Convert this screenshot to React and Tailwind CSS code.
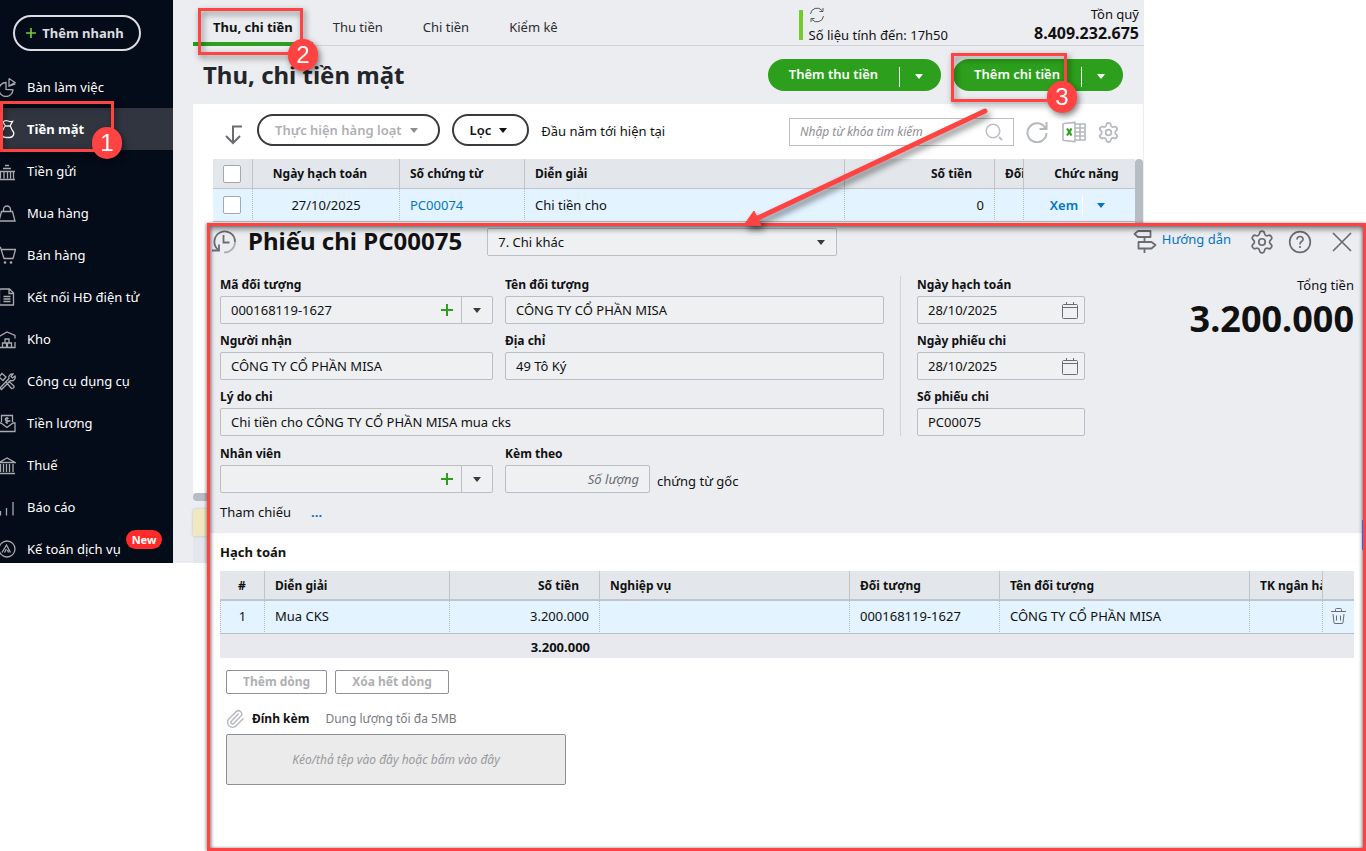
import { useState } from "react";
import clsx from "clsx";
import { twMerge } from "tailwind-merge";
import { Paperclip, Settings } from "lucide-react";

const menuItems = [
  { name: "Bàn làm việc", icon: "desk" },
  { name: "Tiền mặt", icon: "cash" },
  { name: "Tiền gửi", icon: "deposit" },
  { name: "Mua hàng", icon: "buy" },
  { name: "Bán hàng", icon: "sell" },
  { name: "Kết nối HĐ điện tử", icon: "invoice" },
  { name: "Kho", icon: "stock" },
  { name: "Công cụ dụng cụ", icon: "tools" },
  { name: "Tiền lương", icon: "salary" },
  { name: "Thuế", icon: "tax" },
  { name: "Báo cáo", icon: "report" },
  { name: "Kế toán dịch vụ", icon: "service", isNew: true },
];

const menuPaths = {
  desk: "M10 5.5A7 7 0 1 0 17 12.8L10 12.5ZM13 1.5V9L19.5 7M13 1.5L19 5.5L13 9",
  cash: "M7 3q2.5-2 5-1t4.5.5l-2.5 4.5h-4.5zM9.500 7c-2 1-1.500 3-3 4.500c-2.500 3-.500 7 3.500 7h3.500c4 0 5.500-4.500 3-7c-1.500-1.500-1-3.500-2.500-4.500",
  deposit: "M9 4.5h4M7 7.5h8M3 10.5h16M4.500 10.500v7M8 10.500v7M11.500 10.500v7M14.500 10.500v7M17.500 10.500v7M3 18.500h16",
  buy: "M5.5 8.500h11l2.500 9.500h-16zM7.500 8.500v-2a3.500 3.500 0 0 1 7 0v2",
  sell: "M2 2.5h2.500l3.500 11h9l2.500-9h-14.500",
  invoice: "M5 2h8.5l4 4v12h-12.500q-1.500 0-1.500-1.500v-13q0-1.500 1.500-1.500zM13 2v4.500h4.500M7.500 9.500h7M7.500 12h7M7.500 14.500h7",
  stock: "M3 7.5L11 3L19 6.500v3M19 13v5.500H3M9 10h4v4h-4zM6.500 14h4v4.500h-4zM11.500 14h4v4.500h-4z",
  tools: "M4 17l9-9.500a3.500 3.500 0 0 1 4-4.500l-2 2.500 1.500 1.500 2.500-2a3.500 3.500 0 0 1-4.500 4.500l-9 9zM3 6l3-3.500 4 3.500-3 3.500zM10 11l5.500 6.500q3 0 2.500-2.500l-5.500-5",
  salary: "M5.5 9v-6.500h11v6.500M3 10v8.500h16v-8.500h-2l-6 4.500-6-4.500zM12.800 5.500q-3.500-1-3.500.800t3.500 1.500t-3.500 1.500M11 4v7",
  tax: "M3 7.5L11 3l8 4.500zM4.500 9v8M7.500 9v8M10.500 9v8M13.500 9v8M17 9v8M3 18.500h16",
  report: "M4.500 14v4.500M10.500 11v7.500M17 5v13.500",
  service: "M19 10a8 8 0 1 1-16 0a8 8 0 1 1 16 0M6 13.500L10.500 6l4 7.500M8.500 13.500l2-3.500M12.500 13.500l-1-2.500",
};

const Caret = ({ className }) => (
  <svg viewBox="0 0 8 5" className={clsx("h-[5px] w-2 fill-current", className)}>
    <path d="M0 0h8L4 5z" />
  </svg>
);

const PlusIcon = ({ className }) => (
  <svg viewBox="0 0 12 12" fill="none" stroke="currentColor" strokeWidth="2" className={className}>
    <path d="M6 0v12M0 6h12" />
  </svg>
);

const Sidebar = () => (
  <aside className="w-[173px] shrink-0 bg-[#040b19] pt-[15px] text-white">
    <button className="ml-[13px] flex h-9 w-32 items-center justify-center gap-1.5 rounded-full border-2 border-[#dcdde0] pr-1 font-bold text-[#dcdde0]">
      <PlusIcon className="size-2.5 text-[#74cb2f]" />
      Thêm nhanh
    </button>
    <nav className="mt-[15px] -mb-[7px]">
      {menuItems.map((item) => (
        <a
          key={item.name}
          href="#"
          className={clsx(
            "flex items-center py-[11px] whitespace-nowrap",
            item.name === "Tiền mặt" && "bg-[#30353f] font-bold"
          )}
        >
          <svg
            viewBox="0 0 20 20"
            fill="none"
            stroke="currentColor"
            strokeWidth="1.3"
            className={clsx("mr-[11px] -ml-1 size-5 shrink-0", item.icon === "cash" ? "text-white" : "text-[#a9aaad]")}
          >
            <path d={menuPaths[item.icon]} />
            {item.icon === "sell" && (
              <g fill="currentColor" stroke="none">
                <circle cx="9" cy="17.5" r="1.3" />
                <circle cx="15" cy="17.5" r="1.3" />
              </g>
            )}
          </svg>
          <span>{item.name}</span>
          {item.isNew && (
            <span className="-mt-5 ml-[5px] rounded-full bg-[#ff2a2a] px-1.5 text-[11px] leading-[19px] font-bold">New</span>
          )}
        </a>
      ))}
    </nav>
  </aside>
);

const TopTabs = () => {
  const [active, setActive] = useState("Thu, chi tiền");
  return (
    <div className="ml-5 flex h-[46px] items-stretch border-b border-[#d2d4d9]">
      {["Thu, chi tiền", "Thu tiền", "Chi tiền", "Kiểm kê"].map((tab) => (
        <button
          key={tab}
          onClick={() => setActive(tab)}
          className={clsx(
            "-mb-px border-b-4 px-5 pt-3",
            active === tab ? "border-[#2ca01c] font-bold" : "border-transparent text-[#2b2c30]"
          )}
        >
          {tab}
        </button>
      ))}
      <div className="ml-auto flex pt-[5px] pr-[5px]">
        <div className="mt-[5px] mr-1.5 h-[30px] w-1 bg-[#74cb2f]" />
        <div className="mr-[86px]">
          <svg viewBox="0 0 16 16" fill="none" stroke="#55575d" className="my-0.5 size-4">
            <path d="M1.5 7a6.500 6.500 0 0 1 11.500-3.500M14 1v3.500h-3.500M14.500 9a6.500 6.500 0 0 1-11.500 3.500M2 15v-3.500h3.500" />
          </svg>
          <p>Số liệu tính đến: 17h50</p>
        </div>
        <div className="text-right">
          <p className="leading-[18px]">Tồn quỹ</p>
          <p className="text-base leading-5 font-bold">8.409.232.675</p>
        </div>
      </div>
    </div>
  );
};

const AddButton = ({ label }) => (
  <div className="flex h-8 items-center rounded-full bg-[#2ca01c] font-semibold text-white">
    <button className="h-8 px-[21px] pb-0.5">{label}</button>
    <span className="mt-1 h-5 w-px bg-white" />
    <button aria-label={label + " khác"} className="flex h-8 w-[41px] items-center justify-center pt-0.5 pr-1">
      <Caret />
    </button>
  </div>
);

const Toolbar = () => (
  <div className="mb-[3px] flex h-[52px] items-center pr-[23px] pl-8">
    <svg viewBox="0 0 18 20" fill="none" stroke="#6b6c72" strokeWidth="2" className="mt-2.5 h-5 w-[18px]">
      <path d="M17 1.5H8V17M1 11l7 7 7-7" />
    </svg>
    <button className="ml-3.5 flex h-8 items-center gap-2 rounded-full border-2 border-[#393a3d] px-4 font-semibold text-[#afb0b3]">
      Thực hiện hàng loạt
      <Caret className="mr-1 text-[#8d8e92]" />
    </button>
    <button className="ml-3 flex h-8 items-center gap-2 rounded-full border-2 border-[#393a3d] px-4 font-semibold">
      Lọc
      <Caret className="mr-1" />
    </button>
    <span className="mt-0.5 ml-3">Đầu năm tới hiện tại</span>
    <div className="mt-1 ml-auto flex h-7 w-[225px] items-center border border-[#babec5] pr-2.5 pl-2.5">
      <input
        aria-label="Tìm kiếm"
        placeholder="Nhập từ khóa tìm kiếm"
        className="min-w-0 flex-1 text-xs outline-none placeholder:text-[#8d8e92] placeholder:italic"
      />
      <svg viewBox="0 0 18 18" fill="none" stroke="#babec5" strokeWidth="1.5" className="size-[18px]">
        <circle cx="8" cy="8" r="6.8" />
        <path d="M14 14l3 3" strokeWidth="2" />
      </svg>
    </div>
    <button aria-label="Làm mới" className="mt-1 ml-3 text-[#b4b8bf]">
      <svg viewBox="0 0 22 22" fill="none" stroke="currentColor" strokeWidth="2" className="size-[22px]">
        <path d="M19.5 7.500A9.500 9.500 0 1 0 20.500 12M20.500 1v7h-7" />
      </svg>
    </button>
    <button aria-label="Xuất Excel" className="mt-1 ml-3.5 text-[#b4b8bf]">
      <svg viewBox="0 0 24 22" fill="none" stroke="currentColor" strokeWidth="1.6" className="h-[22px] w-6">
        <path d="M1 3Q1 2.500 2 2.500L13 1.500v19L2 19.500Q1 19.500 1 18.500zM13 3h10v16H13M18 3v16M13 7h10M13 11h10M13 15h10" />
        <path d="M5 7.5l4.500 7M9.500 7.500l-4.500 7" stroke="#2ca01c" strokeWidth="2.2" />
      </svg>
    </button>
    <button aria-label="Thiết lập" className="mt-1 ml-[11px] text-[#b4b8bf]">
      <Settings size={23} strokeWidth={1.8} />
    </button>
  </div>
);

const th = "overflow-hidden border-r border-[#c1c4c8] px-2.5 text-left text-xs font-bold whitespace-nowrap last:border-r-0";
const td = "overflow-hidden border-r border-dotted border-[#b4b8bf] border-b border-b-[#babec5] px-2.5 whitespace-nowrap last:border-r-0 [border-bottom-style:solid]";
const checkbox = "mx-auto block size-[18px] appearance-none rounded-xs border border-[#a5a8ad] bg-white";

const CashTable = () => (
  <div className="flex items-start pl-5">
    <table className="w-full table-fixed border-separate border-spacing-0">
      <colgroup>
        <col className="w-10" />
        <col className="w-[147px]" />
        <col className="w-[125px]" />
        <col />
        <col className="w-[150px]" />
        <col className="w-[29px]" />
        <col className="w-[111px]" />
      </colgroup>
      <thead>
        <tr className="h-[30px] bg-[#e3e7eb] [&>th]:border-b [&>th]:border-b-[#c1c4c8]">
          <th className={twMerge(th, "pr-0.5 pl-0")}>
            <input type="checkbox" aria-label="Chọn tất cả" className={checkbox} />
          </th>
          <th className={th}>
            <div className="pr-3 text-center">Ngày hạch toán</div>
          </th>
          <th className={th}>Số chứng từ</th>
          <th className={th}>Diễn giải</th>
          <th className={th}>
            <div className="pr-3 text-right">Số tiền</div>
          </th>
          <th className={twMerge(th, "pr-0")}>Đối tượng</th>
          <th className={th}>
            <div className="pl-3.5 text-center">Chức năng</div>
          </th>
        </tr>
      </thead>
      <tbody>
        <tr className="h-[33px] bg-[#e3f3ff]">
          <td className={twMerge(td, "pr-0.5 pl-0")}>
            <input type="checkbox" aria-label="Chọn PC00074" className={checkbox} />
          </td>
          <td className={clsx(td, "text-center")}>27/10/2025</td>
          <td className={td}>
            <a href="#" className="text-[#0077c5]">PC00074</a>
          </td>
          <td className={td}>Chi tiền cho</td>
          <td className={clsx(td, "text-right")}>0</td>
          <td className={td}></td>
          <td className={td}>
            <div className="flex items-center justify-center text-[#0077c5]">
              <a href="#" className="font-semibold">Xem</a>
              <span className="mr-3.5 ml-1 h-5 w-px bg-white" />
              <button aria-label="Chức năng khác" className="pr-1">
                <Caret />
              </button>
            </div>
          </td>
        </tr>
      </tbody>
    </table>
    <div className="h-[334px] w-2 shrink-0 rounded-t bg-[#b8bcc3]" />
  </div>
);

const CashPage = () => (
  <main className="flex min-w-0 flex-1 flex-col bg-[#ecedf1]">
    <TopTabs />
    <div className="flex h-[58px] items-center justify-between pr-[21px] pl-[30px]">
      <h1 className="text-2xl font-bold text-[#22252a]">Thu, chi tiền mặt</h1>
      <div className="flex gap-3">
        <AddButton label="Thêm thu tiền" />
        <AddButton label="Thêm chi tiền" />
      </div>
    </div>
    <div className="mr-px ml-5 bg-white">
      <Toolbar />
      <CashTable />
    </div>
    <div className="ml-5 h-2 rounded-full bg-[#b8bcc3]" />
    <div className="mt-2 ml-5 flex-1 bg-[#e3e7eb]">
      <div className="h-[27px] rounded-t bg-[#f0e9bf] shadow-[0_0_3px_#b8bcc3]" />
    </div>
  </main>
);

const inputStyle = "h-7 w-full rounded-xs border border-[#babec5] bg-[#eef0f2] px-2.5 outline-none";

const Field = ({ id, label, children, className }) => (
  <div className={className}>
    <label htmlFor={id} className="block h-5 text-xs leading-[18px] font-bold">
      {label}
    </label>
    {children}
  </div>
);

const TextField = ({ id, label, value, className }) => (
  <Field id={id} label={label} className={className}>
    <input id={id} defaultValue={value} className={inputStyle} />
  </Field>
);

const ComboField = ({ id, label, value, className }) => (
  <Field id={id} label={label} className={className}>
    <div className="flex h-7 rounded-xs border border-[#babec5] bg-[#eef0f2]">
      <input id={id} defaultValue={value} className="min-w-0 flex-1 px-2.5 outline-none" />
      <button aria-label={"Thêm " + label} className="px-2 text-[#2ca01c]">
        <PlusIcon className="size-3" />
      </button>
      <button aria-label={"Chọn " + label} className="flex w-[31px] items-center justify-center border-l border-[#babec5] text-[#393a3d]">
        <Caret />
      </button>
    </div>
  </Field>
);

const DateField = ({ id, label, value }) => (
  <Field id={id} label={label}>
    <div className="flex h-7 items-center rounded-xs border border-[#babec5] bg-[#eef0f2] pr-1.5">
      <input id={id} defaultValue={value} className="min-w-0 flex-1 px-2.5 outline-none" />
      <button aria-label={"Chọn " + label}>
        <svg viewBox="0 0 16 17" fill="none" stroke="#6b6c72" className="h-[17px] w-4">
          <path d="M.5 3.500q0-1 1-1h13q1 0 1 1v12q0 1-1 1h-13q-1 0-1-1zM.5 5.500h15M4.500 0v3M11.500 0v3" />
        </svg>
      </button>
    </div>
  </Field>
);

const VoucherHeader = () => (
  <div className="flex h-[50px] items-start pr-[11px] pl-0.5 text-[#6b6c72]">
    <svg viewBox="0 0 24 24" fill="none" stroke="currentColor" strokeWidth="1.8" className="mt-1 size-6">
      <path d="M6.5 20A10.300 10.300 0 1 1 23 12" />
      <path d="M23 12A10.300 10.300 0 0 1 12 22.300" opacity="0.5" />
      <path d="M11.5 5v7.500h6M0 20.500h7v-6" />
    </svg>
    <h2 className="ml-3 text-2xl leading-[30px] font-bold whitespace-nowrap text-[#111111]">Phiếu chi PC00075</h2>
    <div className="relative mt-0.5 ml-[25px] w-[350px]">
      <select aria-label="Loại phiếu chi" className={clsx(inputStyle, "appearance-none text-[#111111]")}>
        <option>7. Chi khác</option>
      </select>
      <Caret className="pointer-events-none absolute top-3 right-3 text-[#393a3d]" />
    </div>
    <a href="#" className="ml-auto flex pt-[3px] text-[#0077c5]">
      <svg viewBox="0 0 24 24" fill="none" stroke="#6b6c72" strokeWidth="1.8" strokeLinejoin="round" className="size-6">
        <path d="M5 2h12.500v6H5L1.500 5zM11.500 8v5M5.500 13h13l4 3-4 3.500H5.500zM11.500 19.500V24" />
      </svg>
      <span className="ml-[5px]">Hướng dẫn</span>
    </a>
    <button aria-label="Thiết lập" className="mt-[3px] ml-[18px]">
      <Settings size={26} strokeWidth={1.6} />
    </button>
    <button aria-label="Trợ giúp" className="mt-1 ml-[13px]">
      <svg viewBox="0 0 24 24" fill="none" stroke="currentColor" strokeWidth="1.7" className="size-6">
        <circle cx="12" cy="12" r="10.3" />
        <path d="M9 9.5q0-3 3-3t3 2.700q0 1.300-1.500 2.300t-1.500 3M12 16v2" />
      </svg>
    </button>
    <button aria-label="Đóng" className="mt-1.5 ml-5">
      <svg viewBox="0 0 20 20" fill="none" stroke="currentColor" strokeWidth="1.7" className="size-5">
        <path d="M1 1l18 18M19 1L1 19" />
      </svg>
    </button>
  </div>
);

const VoucherForm = () => (
  <div className="pr-[9px] pb-[11px] pl-2.5">
    <div className="flex">
      <div className="grid max-w-[664px] flex-1 grid-cols-[273px_1fr] gap-x-3 gap-y-2">
        <ComboField id="code" label="Mã đối tượng" value="000168119-1627" />
        <TextField id="partner" label="Tên đối tượng" value="CÔNG TY CỔ PHẦN MISA" />
        <TextField id="receiver" label="Người nhận" value="CÔNG TY CỔ PHẦN MISA" />
        <TextField id="address" label="Địa chỉ" value="49 Tô Ký" />
        <TextField id="reason" label="Lý do chi" value="Chi tiền cho CÔNG TY CỔ PHẦN MISA mua cks" className="col-span-2" />
      </div>
      <div className="mx-4 w-px bg-[#d2d4d9]" />
      <div className="flex w-[168px] flex-col gap-2">
        <DateField id="postDate" label="Ngày hạch toán" value="28/10/2025" />
        <DateField id="voucherDate" label="Ngày phiếu chi" value="28/10/2025" />
        <TextField id="voucherNo" label="Số phiếu chi" value="PC00075" />
      </div>
      <div className="ml-auto text-right">
        <p className="leading-[18px]">Tổng tiền</p>
        <p className="text-4xl leading-[50px] font-bold">3.200.000</p>
      </div>
    </div>
    <div className="mt-[9px] flex">
      <ComboField id="employee" label="Nhân viên" className="w-[273px]" />
      <Field id="attached" label="Kèm theo" className="ml-3 w-[145px]">
        <input
          id="attached"
          placeholder="Số lượng"
          className={clsx(inputStyle, "text-right placeholder:text-[#6b6c72] placeholder:italic")}
        />
      </Field>
      <span className="mt-[26px] ml-[7px]">chứng từ gốc</span>
    </div>
    <div className="mt-[9px] flex gap-5">
      <span>Tham chiếu</span>
      <a href="#" aria-label="Chọn tham chiếu" className="font-bold text-[#0077c5]">...</a>
    </div>
  </div>
);

const VoucherTable = () => (
  <table className="w-full table-fixed border-separate border-spacing-0">
    <colgroup>
      <col className="w-[45px]" />
      <col className="w-[185px]" />
      <col className="w-[150px]" />
      <col />
      <col className="w-[150px]" />
      <col className="w-[250px]" />
      <col className="w-[73px]" />
      <col className="w-[31px]" />
    </colgroup>
    <thead>
      <tr className="h-[30px] bg-[#e3e7eb] [&>th]:border-b-2 [&>th]:border-b-[#c1c4c8] [&>th]:pt-0.5">
        <th className={th}>
          <div className="text-center">#</div>
        </th>
        <th className={th}>Diễn giải</th>
        <th className={th}>
          <div className="pr-2.5 text-right">Số tiền</div>
        </th>
        <th className={th}>Nghiệp vụ</th>
        <th className={th}>Đối tượng</th>
        <th className={th}>Tên đối tượng</th>
        <th className={twMerge(th, "pr-0")}>TK ngân hàng</th>
        <th className={th}></th>
      </tr>
    </thead>
    <tbody>
      <tr className="h-[33px] bg-[#e3f3ff] [&>td]:pb-0.5">
        <td className={clsx(td, "border-l border-l-[#b4b8bf] text-center")}>1</td>
        <td className={td}>Mua CKS</td>
        <td className={clsx(td, "text-right")}>3.200.000</td>
        <td className={td}></td>
        <td className={td}>000168119-1627</td>
        <td className={td}>CÔNG TY CỔ PHẦN MISA</td>
        <td className={td}></td>
        <td className={twMerge(td, "px-0")}>
          <button aria-label="Xóa dòng" className="mx-auto block">
            <svg viewBox="0 0 15 16" fill="none" stroke="#6b6c72" className="h-4 w-[15px]">
              <path d="M0 3.5h15M4.500 3.500v-2q0-1 1-1h4q1 0 1 1v2M2 6l1 8.500q0 1 1 1h7q1 0 1-1L13 6M5.500 7.500v5M9.500 7.500v5" />
            </svg>
          </button>
        </td>
      </tr>
    </tbody>
    <tfoot>
      <tr className="h-6 bg-[#e8e9ee] font-bold">
        <td colSpan={2}></td>
        <td className="px-2.5 pt-0.5 text-right">3.200.000</td>
        <td colSpan={5}></td>
      </tr>
    </tfoot>
  </table>
);

const VoucherDetail = () => (
  <div className="flex-1 bg-white pt-[9px] pr-[9px] pb-14 pl-2.5">
    <h3 className="mb-[9px] font-bold">Hạch toán</h3>
    <VoucherTable />
    <div className="ml-1.5 text-xs leading-5">
      <div className="mt-3 flex gap-2 font-bold text-[#afb0b3]">
        <button className="h-6 rounded-xs border border-[#8d9096] px-4">Thêm dòng</button>
        <button className="h-6 rounded-xs border border-[#8d9096] px-4">Xóa hết dòng</button>
      </div>
      <div className="mt-[15px] flex items-center">
        <Paperclip size={20} strokeWidth={1.7} className="-ml-px mr-[7px] text-[#b4b8bf]" />
        <span className="mr-4 font-bold">Đính kèm</span>
        <span className="text-[#77797e]">Dung lượng tối đa 5MB</span>
      </div>
      <label className="mt-[5px] flex h-[51px] w-[340px] items-center justify-center rounded-xs border border-[#8d9096] bg-[#ebebeb] text-[#999a9e] italic">
        Kéo/thả tệp vào đây hoặc bấm vào đây
        <input type="file" className="sr-only" />
      </label>
    </div>
  </div>
);

const Voucher = () => (
  <section className="relative col-start-1 row-start-1 mt-[223px] ml-[207px] flex flex-col border-[3px] border-[#ff4343] bg-[#ecedf1] shadow-[-1px_0_3px_rgba(0,0,0,0.4)]">
    <VoucherHeader />
    <VoucherForm />
    <VoucherDetail />
    <div className="pointer-events-none absolute inset-0 shadow-[inset_0_4px_5px_rgba(0,0,0,0.35),inset_-1px_0_3px_rgba(0,0,0,0.3),inset_2px_0_3px_rgba(0,0,0,0.2)]" />
    <div className="absolute top-[294px] right-0 h-[30px] w-px bg-[#0077ff]" />
  </section>
);

// Numbered red frame that points out one step
const Step = ({ number, className, badgeClassName }) => (
  <div className={clsx("pointer-events-none absolute z-20 border-[3px] border-[#ff4343] drop-shadow-[2px_3px_3px_rgba(0,0,0,0.5)]", className)}>
    <span
      className={clsx(
        "absolute flex h-8 w-[30px] items-center justify-center rounded-full bg-[#ff4343] font-['Liberation_Sans',sans-serif] text-2xl text-white",
        badgeClassName
      )}
    >
      {number}
    </span>
  </div>
);

const StepArrow = () => (
  <svg viewBox="0 0 250 125" className="pointer-events-none absolute top-[105px] right-[376px] z-10 h-[125px] w-[250px] overflow-visible drop-shadow-[3px_4px_3px_rgba(0,0,0,0.5)]">
    <path d="M245 6L18 113" stroke="#ff4343" strokeWidth="5" strokeLinecap="round" />
    <path d="M4 120L14 106L21 120.500z" fill="#ff4343" stroke="#ff4343" strokeLinejoin="round" />
  </svg>
);

export default function App() {
  return (
    <div className="relative grid min-h-screen bg-white font-['Noto_Sans',sans-serif] text-[13px] leading-5 text-[#111111]">
      <div className="col-start-1 row-start-1 mr-[222px] flex self-start overflow-hidden">
        <Sidebar />
        <CashPage />
      </div>
      <Voucher />
      <Step number={1} className="top-[101px] left-0 h-[51px] w-[114px]" badgeClassName="-right-[11px] -bottom-2.5" />
      <Step number={2} className="top-2 left-[198px] h-[47px] w-[105px]" badgeClassName="-right-[18px] -bottom-[19px]" />
      <Step number={3} className="top-[53px] right-[299px] h-[49px] w-[116px]" badgeClassName="-right-[13px] -bottom-[14px]" />
      <StepArrow />
    </div>
  );
}
